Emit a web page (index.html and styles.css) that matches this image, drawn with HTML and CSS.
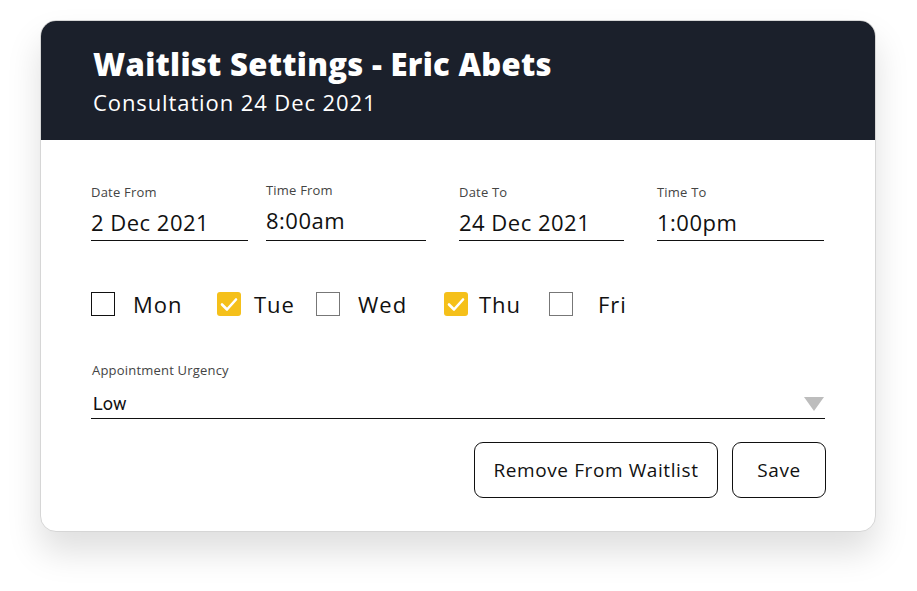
FILE: index.html
```html
<!DOCTYPE html>
<html lang="en">
<head>
    <meta charset="UTF-8">
    <meta name="viewport" content="width=device-width, initial-scale=1.0">
    <title>Waitlist Settings</title>
    <link rel="stylesheet" href="styles.css">
</head>
<body>
    <div class="card">
        <div class="header">
            <h1>Waitlist Settings - Eric Abets</h1>
            <p>Consultation 24 Dec 2021</p>
        </div>
        <div class="content">
            <div class="fields">
                <div class="field f1">
                    <label>Date From</label>
                    <div class="value">2 Dec 2021</div>
                </div>
                <div class="field f2">
                    <label>Time From</label>
                    <div class="value">8:00am</div>
                </div>
                <div class="field f3">
                    <label>Date To</label>
                    <div class="value">24 Dec 2021</div>
                </div>
                <div class="field f4">
                    <label>Time To</label>
                    <div class="value">1:00pm</div>
                </div>
            </div>
            <div class="days">
                <div class="day d-mon"><span class="box"></span><span class="day-name">Mon</span></div>
                <div class="day d-tue"><span class="box checked"><svg viewBox="0 0 24 24" width="24" height="24"><path d="M5 12.5l5 5 9-10" fill="none" stroke="#fff" stroke-width="2.6" stroke-linecap="round" stroke-linejoin="round"/></svg></span><span class="day-name">Tue</span></div>
                <div class="day d-wed"><span class="box grey"></span><span class="day-name">Wed</span></div>
                <div class="day d-thu"><span class="box checked"><svg viewBox="0 0 24 24" width="24" height="24"><path d="M5 12.5l5 5 9-10" fill="none" stroke="#fff" stroke-width="2.6" stroke-linecap="round" stroke-linejoin="round"/></svg></span><span class="day-name">Thu</span></div>
                <div class="day d-fri"><span class="box grey"></span><span class="day-name">Fri</span></div>
            </div>
            <div class="urgency">
                <label>Appointment Urgency</label>
                <div class="select">
                    <span>Low</span>
                    <span class="arrow"></span>
                </div>
            </div>
            <div class="actions">
                <button class="btn remove">Remove From Waitlist</button>
                <button class="btn save">Save</button>
            </div>
        </div>
    </div>
</body>
</html>
```

FILE: styles.css
```css
body {
    font-family: 'Open Sans', 'Noto Sans', sans-serif;
    margin: 0;
    padding: 0;
    background: #ffffff;
    color: #111;
}

.card {
    width: 834px;
    margin: 20px 0 60px 40px;
    border: 1px solid #d6d6d6;
    border-radius: 16px;
    background: white;
    box-shadow: 0px 20px 34px rgba(0, 0, 0, 0.13);
    overflow: hidden;
}

.header {
    background: #1b202b;
    color: white;
    height: 119px;
    padding: 0 0 0 52px;
    box-sizing: border-box;
}

.header h1 {
    margin: 0;
    padding-top: 23px;
    font-size: 31px;
    font-weight: 800;
    letter-spacing: 0.3px;
    line-height: 40px;
}

.header p {
    margin: 3px 0 0 0;
    font-size: 22px;
    letter-spacing: 0.9px;
    line-height: 30px;
}

.content {
    padding: 44px 50px 33px 50px;
}

.fields {
    display: flex;
}

.field {
    border-bottom: 1.5px solid #111;
}

.f1 { width: 157px; margin-right: 18px; }
.f2 { width: 160px; margin-right: 33px; margin-top: -2px; }
.f3 { width: 165px; margin-right: 33px; }
.f4 { width: 167px; }

.field label,
.urgency label {
    display: block;
    font-size: 13px;
    color: #444;
    line-height: 16px;
    letter-spacing: 0.2px;
}

.field .value {
    font-size: 22px;
    letter-spacing: 0.5px;
    line-height: 28px;
    padding: 8px 0 4px 0;
}

.days {
    display: flex;
    align-items: center;
    margin-top: 49px;
}

.day {
    display: flex;
    align-items: center;
}

.d-mon { width: 126px; }
.d-tue { width: 99px; }
.d-wed { width: 128px; }
.d-thu { width: 105px; }

.box {
    width: 24px;
    height: 24px;
    box-sizing: border-box;
    border: 1.5px solid #111;
    display: inline-block;
}

.box.grey {
    border-color: #777;
}

.box.checked {
    background: #f5c01a;
    border: none;
    border-radius: 3px;
}

.box svg {
    display: block;
}

.day-name {
    font-size: 22px;
    letter-spacing: 1px;
    line-height: 28px;
}

.d-mon .day-name { margin-left: 18px; }
.d-tue .day-name { margin-left: 13px; }
.d-wed .day-name { margin-left: 18px; }
.d-thu .day-name { margin-left: 11px; }
.d-fri .day-name { margin-left: 25px; }

.urgency {
    margin-top: 44px;
}

.urgency label {
    padding-left: 1px;
}

.select {
    display: flex;
    justify-content: space-between;
    align-items: center;
    border-bottom: 1.5px solid #111;
    margin-top: 14px;
    padding: 0 0 2px 2px;
    font-family: 'Roboto', sans-serif;
    font-size: 18px;
    line-height: 24px;
}

.arrow {
    width: 0;
    height: 0;
    border-left: 10px solid transparent;
    border-right: 10px solid transparent;
    border-top: 14px solid #bdbdbd;
    margin-right: 1px;
}

.actions {
    display: flex;
    justify-content: flex-end;
    gap: 14px;
    margin-top: 23px;
    margin-right: -1px;
}

.btn {
    font-family: 'Open Sans', 'Noto Sans', sans-serif;
    font-size: 19px;
    letter-spacing: 0.6px;
    color: #111;
    background: white;
    border: 1.2px solid #111;
    border-radius: 9px;
    height: 56px;
    padding: 0;
    cursor: pointer;
}

.btn.remove {
    width: 244px;
}

.btn.save {
    width: 94px;
}
```
